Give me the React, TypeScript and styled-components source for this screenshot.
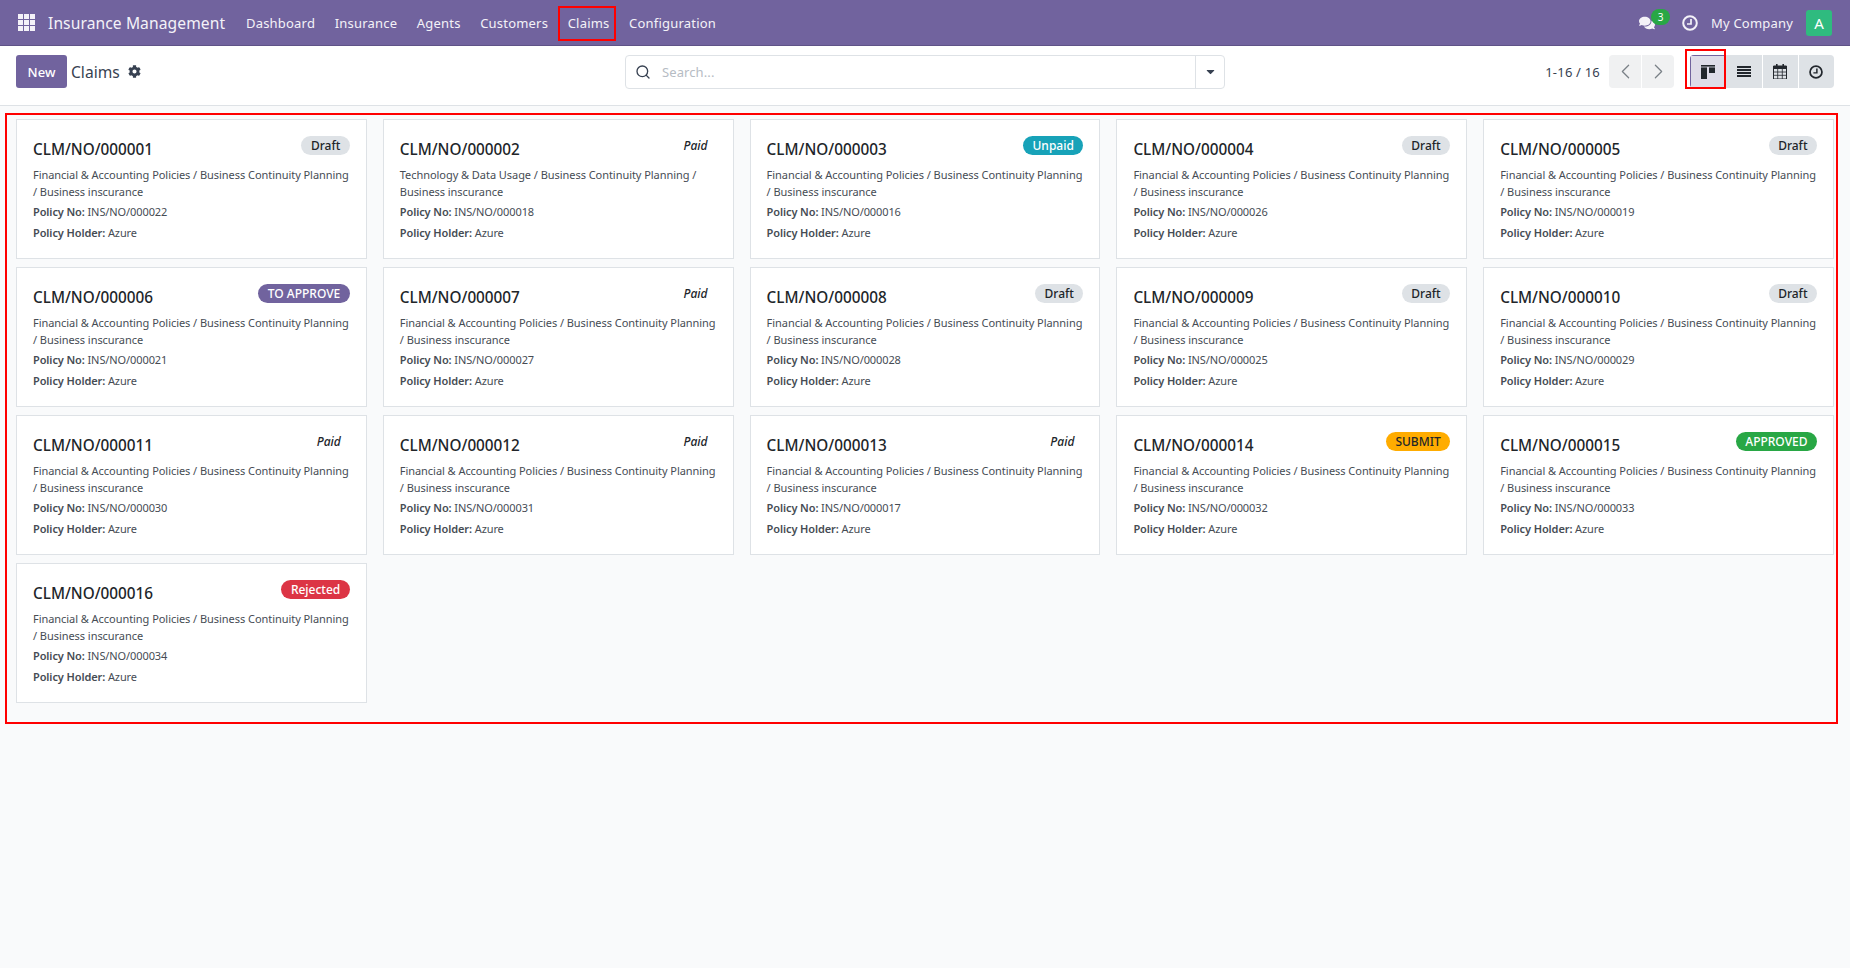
import styled, { createGlobalStyle } from "styled-components";
import { FaCog, FaComments, FaCaretDown } from "react-icons/fa";
import { LuChevronLeft, LuChevronRight, LuSearch } from "react-icons/lu";

const GlobalStyle = createGlobalStyle`
  html, body {
    margin: 0;
    height: 100%;
    background: #f9fafb;
  }
  body {
    font-family: "Noto Sans", "Open Sans", sans-serif;
    font-size: 13px;
    color: #374151;
  }
  * {
    box-sizing: border-box;
  }
`;

const Page = styled.div`
  position: relative;
  min-height: 968px;
  overflow: hidden;
`;

const NavBar = styled.div`
  height: 46px;
  background: #71639e;
  color: #f4f2f8;
  display: flex;
  align-items: center;
  padding: 0 18px 0 18px;
  border-bottom: 1px solid #5f5387;
`;

const AppsIcon = styled.svg`
  width: 17px;
  height: 17px;
  margin-right: 13px;
`;

const Brand = styled.div`
  font-size: 15.6px;
  letter-spacing: 0.1px;
  margin-right: 11px;
`;

const NavItem = styled.div`
  padding: 0 9.8px;
  font-size: 13px;
  letter-spacing: 0.2px;
`;

const NavRight = styled.div`
  margin-left: auto;
  display: flex;
  align-items: center;
`;

const ChatWrap = styled.div`
  position: relative;
  display: flex;
  margin-right: 27px;
  font-size: 16px;
`;

const Counter = styled.span`
  position: absolute;
  top: -6px;
  left: 12px;
  width: 19px;
  height: 16px;
  border-radius: 8px;
  background: #28a745;
  color: #fff;
  font-size: 10px;
  line-height: 16px;
  text-align: center;
`;

const CompanyName = styled.span`
  margin: 0 13px 0 13px;
  font-size: 13px;
  letter-spacing: 0.2px;
`;

const Avatar = styled.div`
  width: 26px;
  height: 26px;
  border-radius: 3px;
  background: #2fbb7f;
  color: #fff;
  font-size: 15px;
  display: flex;
  align-items: center;
  justify-content: center;
`;

const ControlPanel = styled.div`
  height: 60px;
  background: #fff;
  border-bottom: 1px solid #dee2e6;
  display: grid;
  grid-template-columns: 1fr 600px 1fr;
  align-items: center;
  padding: 0 16px 8px 16px;
`;

const Left = styled.div`
  display: flex;
  align-items: center;
`;

const NewButton = styled.div`
  width: 51px;
  height: 33px;
  border-radius: 3px;
  background: #71639e;
  color: #fff;
  font-weight: 500;
  display: flex;
  align-items: center;
  justify-content: center;
  font-size: 13px;
`;

const Crumb = styled.span`
  margin: 0 8px 0 4px;
  font-size: 15.6px;
`;

const SearchBox = styled.div`
  height: 34px;
  border: 1px solid #dee2e6;
  border-radius: 4px;
  display: flex;
  align-items: center;
  padding-left: 9px;
  background: #fff;
`;

const Placeholder = styled.span`
  margin-left: 11px;
  flex: 1;
  color: #b6bcc4;
  font-size: 13px;
  letter-spacing: 0.1px;
`;

const Caret = styled.div`
  width: 29px;
  height: 100%;
  border-left: 1px solid #dee2e6;
  display: flex;
  align-items: center;
  justify-content: center;
  font-size: 13px;
`;

const Right = styled.div`
  display: flex;
  align-items: center;
  justify-content: flex-end;
`;

const Pager = styled.span`
  font-size: 13px;
  margin-right: 9px;
  letter-spacing: 0.2px;
`;

const ButtonGroup = styled.div`
  display: flex;
  gap: 1px;
  border-radius: 4px;
  overflow: hidden;
`;

const PagerButton = styled.div`
  width: 32px;
  height: 33px;
  background: #f0f1f2;
  color: #7b8288;
  display: flex;
  align-items: center;
  justify-content: center;
  font-size: 25px;
`;

const ViewGroup = styled(ButtonGroup)`
  margin-left: 16px;
`;

const ViewButton = styled.div<{ $active?: boolean }>`
  width: 35.25px;
  height: 33px;
  background: ${(props) => (props.$active ? "#dedce8" : "#dee2e6")};
  border: ${(props) => (props.$active ? "1px solid #71639e" : "none")};
  color: #22272d;
  display: flex;
  align-items: center;
  justify-content: center;
`;

const Grid = styled.div`
  display: grid;
  grid-template-columns: repeat(5, 1fr);
  gap: 8px 16px;
  padding: 13px 16px 0;
`;

const Card = styled.div`
  height: 140px;
  background: #fff;
  border: 1px solid #dee2e6;
  padding: 16px;
`;

const CardHead = styled.div`
  display: flex;
  justify-content: space-between;
  align-items: flex-start;
  height: 31px;
`;

const Title = styled.div`
  font-size: 15.3px;
  font-weight: 500;
  color: #212529;
  margin-top: 3px;
`;

const statusColors: Record<string, { bg: string; fg: string }> = {
  Draft: { bg: "#dee2e6", fg: "#212529" },
  Unpaid: { bg: "#17a2b8", fg: "#fff" },
  "TO APPROVE": { bg: "#71639e", fg: "#fff" },
  SUBMIT: { bg: "#ffac00", fg: "#212529" },
  APPROVED: { bg: "#28a745", fg: "#fff" },
  Rejected: { bg: "#dc3545", fg: "#fff" },
};

const Badge = styled.span<{ $bg: string; $fg: string }>`
  background: ${(props) => props.$bg};
  color: ${(props) => props.$fg};
  border-radius: 10px;
  height: 19px;
  line-height: 19px;
  padding: 0 9.5px;
  font-size: 12px;
  font-weight: 500;
`;

const PaidLabel = styled.span`
  font-size: 12px;
  font-weight: 500;
  font-style: italic;
  color: #212529;
  padding-right: 9px;
  line-height: 19px;
`;

const Line = styled.div`
  font-size: 11px;
  letter-spacing: -0.05px;
  line-height: 16.5px;
  color: #464c54;
`;

const Field = styled(Line)`
  margin-top: 4px;
  letter-spacing: -0.1px;
`;

const Bold = styled.b`
  font-weight: 600;
`;

// red marks drawn over the screenshot
const Mark = styled.div`
  position: absolute;
  border: 2px solid #f00;
  pointer-events: none;
`;

const ClaimsMark = styled(Mark)`
  left: 558px;
  top: 6px;
  width: 58px;
  height: 35px;
`;

const KanbanMark = styled(Mark)`
  left: 1685px;
  top: 49px;
  width: 41px;
  height: 40px;
`;

const AreaMark = styled(Mark)`
  left: 5px;
  top: 113px;
  width: 1833px;
  height: 611px;
`;

function ClockIcon({ size }: { size: number }) {
  return (
    <svg width={size} height={size} viewBox="0 0 16 16" fill="none" stroke="currentColor">
      <circle cx="8" cy="8" r="6.8" strokeWidth="2" />
      <path d="M9 4v5H5" strokeWidth="1.7" />
    </svg>
  );
}

function CalendarIcon() {
  return (
    <svg width="14" height="15" viewBox="0 0 14 15" fill="#22272d">
      <rect x="3" y="0" width="1.6" height="3" />
      <rect x="9.4" y="0" width="1.6" height="3" />
      <path d="M0.5 2h13v13h-13z" fill="none" stroke="#22272d" />
      <rect x="0.5" y="2" width="13" height="3" />
      <path d="M0.5 8h13M0.5 11.3h13M4.7 5v10M9.3 5v10" fill="none" stroke="#22272d" strokeWidth="0.8" />
    </svg>
  );
}

interface Claim {
  no: string;
  category: string;
  policy: string;
  status: string;
}

const finance = "Financial & Accounting Policies / Business Continuity Planning /\u00A0Business inscurance";
const tech = "Technology & Data Usage / Business Continuity Planning / Business inscurance";

const claims: Claim[] = [
  { no: "000001", category: finance, policy: "000022", status: "Draft" },
  { no: "000002", category: tech, policy: "000018", status: "Paid" },
  { no: "000003", category: finance, policy: "000016", status: "Unpaid" },
  { no: "000004", category: finance, policy: "000026", status: "Draft" },
  { no: "000005", category: finance, policy: "000019", status: "Draft" },
  { no: "000006", category: finance, policy: "000021", status: "TO APPROVE" },
  { no: "000007", category: finance, policy: "000027", status: "Paid" },
  { no: "000008", category: finance, policy: "000028", status: "Draft" },
  { no: "000009", category: finance, policy: "000025", status: "Draft" },
  { no: "000010", category: finance, policy: "000029", status: "Draft" },
  { no: "000011", category: finance, policy: "000030", status: "Paid" },
  { no: "000012", category: finance, policy: "000031", status: "Paid" },
  { no: "000013", category: finance, policy: "000017", status: "Paid" },
  { no: "000014", category: finance, policy: "000032", status: "SUBMIT" },
  { no: "000015", category: finance, policy: "000033", status: "APPROVED" },
  { no: "000016", category: finance, policy: "000034", status: "Rejected" },
];

const menu = ["Dashboard", "Insurance", "Agents", "Customers", "Claims", "Configuration"];

function App() {
  return (
    <Page>
      <GlobalStyle />
      <NavBar>
        <AppsIcon viewBox="0 0 17 17" fill="#f4f2f8">
          {[0, 6, 12].map((y) =>
            [0, 6, 12].map((x) => <rect key={`${x}-${y}`} x={x} y={y} width="5" height="5" />)
          )}
        </AppsIcon>
        <Brand>Insurance Management</Brand>
        {menu.map((item) => (
          <NavItem key={item}>{item}</NavItem>
        ))}
        <NavRight>
          <ChatWrap>
            <FaComments />
            <Counter>3</Counter>
          </ChatWrap>
          <ClockIcon size={16} />
          <CompanyName>My Company</CompanyName>
          <Avatar>A</Avatar>
        </NavRight>
      </NavBar>
      <ControlPanel>
        <Left>
          <NewButton>New</NewButton>
          <Crumb>Claims</Crumb>
          <FaCog size={13} />
        </Left>
        <SearchBox>
          <LuSearch size={16} strokeWidth={2} />
          <Placeholder>Search...</Placeholder>
          <Caret>
            <FaCaretDown />
          </Caret>
        </SearchBox>
        <Right>
          <Pager>1-16 / 16</Pager>
          <ButtonGroup>
            <PagerButton>
              <LuChevronLeft strokeWidth={1.2} />
            </PagerButton>
            <PagerButton>
              <LuChevronRight strokeWidth={1.2} />
            </PagerButton>
          </ButtonGroup>
          <ViewGroup>
            <ViewButton $active>
              <svg width="14" height="14" viewBox="0 0 14 14" fill="#22272d">
                <rect x="0" y="0" width="14" height="1.6" />
                <rect x="0" y="2.4" width="6" height="11.6" />
                <rect x="8" y="2.4" width="6" height="5.6" />
              </svg>
            </ViewButton>
            <ViewButton>
              <svg width="14" height="11" viewBox="0 0 14 11" fill="#22272d">
                <rect y="0" width="14" height="2" />
                <rect y="3" width="14" height="2" />
                <rect y="6" width="14" height="2" />
                <rect y="9" width="14" height="2" />
              </svg>
            </ViewButton>
            <ViewButton>
              <CalendarIcon />
            </ViewButton>
            <ViewButton>
              <ClockIcon size={14} />
            </ViewButton>
          </ViewGroup>
        </Right>
      </ControlPanel>
      <Grid>
        {claims.map((claim) => {
          const colors = statusColors[claim.status];
          return (
            <Card key={claim.no}>
              <CardHead>
                <Title>CLM/NO/{claim.no}</Title>
                {colors ? (
                  <Badge $bg={colors.bg} $fg={colors.fg}>
                    {claim.status}
                  </Badge>
                ) : (
                  <PaidLabel>{claim.status}</PaidLabel>
                )}
              </CardHead>
              <Line>{claim.category}</Line>
              <Field>
                <Bold>Policy No:</Bold> INS/NO/{claim.policy}
              </Field>
              <Field>
                <Bold>Policy Holder:</Bold> Azure
              </Field>
            </Card>
          );
        })}
      </Grid>
      <ClaimsMark />
      <KanbanMark />
      <AreaMark />
    </Page>
  );
}

export default App;
